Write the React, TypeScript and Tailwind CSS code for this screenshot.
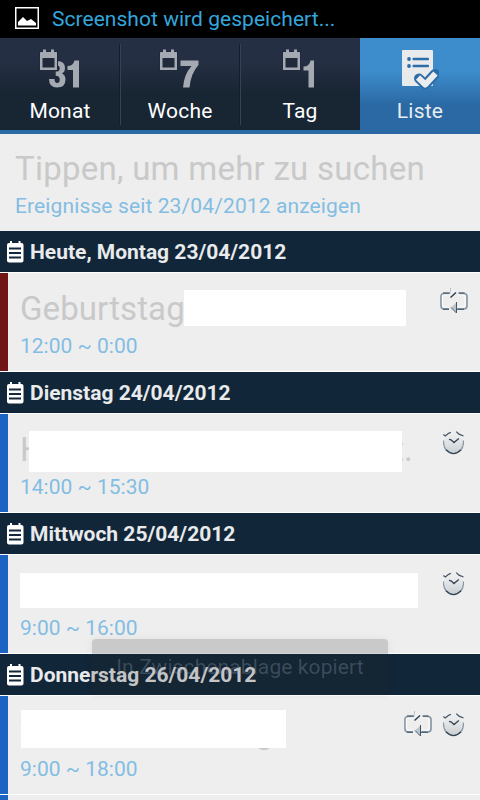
import React from "react";

const font = "font-['Roboto','Liberation_Sans',sans-serif]";

function CalendarGlyph() {
  return (
    <>
      <rect x="-1" y="1" width="19" height="20" rx="1" fill="#202a3a" />
      <rect x="0" y="2" width="17" height="18" rx=".5" fill="#a5a9b2" />
      <rect x="3" y="-.5" width="3" height="3.500" fill="#a5a9b2" />
      <rect x="11" y="-.5" width="3" height="3.500" fill="#a5a9b2" />
      <rect x="2.500" y="8" width="12" height="9.500" fill="#202a3a" />
    </>
  );
}

function DayIcon({ kind }: { kind: "31" | "7" | "1" }) {
  return (
    <svg width="42" height="40" viewBox="0 0 42 40" className="overflow-visible" fill="#a5a9b2">
      {kind === "31" && (
        <g>
          <path d="M9.500 20v-2q0-7 7.500-7q8 0 8 7q0 4-3 5.500q3.500 1.500 3.500 6q0 8-8.500 8q-8 0-8-8.500h5.500q0 4 2.700 4q2.500 0 2.500-3.500q0-3.700-4-3.700v-4.200q4 0 4-3.200q0-3-2.500-3q-2.200 0-2.200 4z" />
          <path d="M27.500 20v-4q5.500 0 7-5.500h4.500v27h-6v-17.500z" />
        </g>
      )}
      {kind === "7" && <path d="M20.500 10.500h18v4.500q-7.500 8-9 22.500h-6.500q1-13 8.500-21.500h-11z" />}
      {kind === "1" && <path d="M20.500 20.500v-4q6 0 7-6h3.500v27h-5.500v-17z" />}
      <CalendarGlyph />
    </svg>
  );
}

function ListIcon() {
  return (
    <svg width="37" height="40" viewBox="0 0 37 40">
      <rect width="31" height="36" rx="1" fill="#e9eaec" />
      <g fill="#2c6eaa">
        <circle cx="7" cy="9" r="1.900" />
        <circle cx="7" cy="16" r="1.900" />
        <rect x="10.500" y="7.800" width="16.500" height="2.400" rx="1" />
        <rect x="10.500" y="14.800" width="16.500" height="2.400" rx="1" />
      </g>
      <path d="M17 28.500l6.300 6l9.700-10.500" fill="none" stroke="#2b6ca9" strokeWidth="10" strokeLinejoin="round" strokeLinecap="round" />
      <path d="M16 27.500l7.300 7l10.200-11" fill="none" stroke="#ebeced" strokeWidth="6" strokeLinejoin="round" />
    </svg>
  );
}

function NoteIcon() {
  return (
    <svg width="17" height="22" viewBox="0 0 17 22" className="mt-2.5 shrink-0">
      <rect x="0" y="2" width="16.500" height="19.500" rx="2" fill="#fff" />
      <rect x="3" y="0" width="2" height="4" fill="#fff" />
      <rect x="11.500" y="0" width="2" height="4" fill="#fff" />
      <path d="M2 7.500h12M2 12h12M2 16.500h12" stroke="#14283b" strokeWidth="2" />
    </svg>
  );
}

function RepeatIcon() {
  return (
    <svg width="28" height="27" viewBox="0 0 28 27">
      <path d="M9 5.500H4q-3 0-3 3v9q0 3.500 3 3.500h5M19 5.500h5q3 0 3 3v9q0 3.500-3 3.500h-6" fill="none" stroke="#8998a6" strokeWidth="1.700" />
      <path d="M9 7H4.500q-2 0-2 2v8q0 2 2 2H9M18 7h5q2 0 2 2v8q0 2-2 2h-5" fill="none" stroke="#fafafa" strokeWidth="1.200" />
      <path d="M3 5h7.500M18.500 5h6" stroke="#354657" strokeWidth="1.200" />
      <path d="M3 21.300h6M17 21.300h7" stroke="#50677c" strokeWidth="1.500" />
      <path d="M10.500 0v9l6-5z" fill="#f0f1f2" />
      <path d="M10.500 0v3.500" stroke="#b3bdc6" />
      <path d="M10.500 9.500l5.500-5" stroke="#263647" strokeWidth="1.300" />
      <path d="M17 14v11l-6-5.500z" fill="#bcc4ca" />
      <path d="M11 19.500l5.500 5.500v-11" fill="none" stroke="#45576a" strokeWidth="1" />
    </svg>
  );
}

function AlarmIcon() {
  return (
    <svg width="21" height="24" viewBox="0 0 21 24" className="mr-1 mt-0.5">
      <defs>
        <linearGradient id="clock-face" x2="0" y2="1">
          <stop stopColor="#eeeeee" />
          <stop offset=".5" stopColor="#dfe2e4" />
          <stop offset="1" stopColor="#c8cdd1" />
        </linearGradient>
      </defs>
      <circle cx="10.500" cy="12.500" r="10" fill="url(#clock-face)" />
      <path d="M.6 9.500q-.6 6 2.800 9.800M20.400 9.500q.6 6-2.800 9.800" fill="none" stroke="#8998a6" strokeWidth="1.200" />
      <path d="M3 18.800q7.500 7.600 15 0" fill="none" stroke="#344454" strokeWidth="1.300" />
      <path d="M.3 3.500l2 1.500l3-2.500l2.500-1.200M13.300 .6l2.700 2.600l4.500 1.800" fill="none" stroke="#405468" strokeWidth="1.300" />
      <path d="M6 8.300l2 .5l3 2.800l4.800-4" fill="none" stroke="#354555" strokeWidth="1.300" />
    </svg>
  );
}

function Tab({ label, children, active = false }: { label: string; children: React.ReactNode; active?: boolean }) {
  return (
    <div
      className={
        active
          ? "flex h-24 w-[120px] flex-col bg-linear-to-b from-[#3d8ccc] from-35% to-[#2a69a3] to-70%"
          : "flex h-[92px] w-[120px] flex-col bg-linear-to-b from-[#252f43] from-25% to-[#182533] to-60%"
      }
    >
      <div className="flex h-[61px] pt-3">{children}</div>
      <div className={active ? "text-center text-[21px] leading-6 tracking-[.2px] text-[#e9edf1]" : "text-center text-[21px] leading-6 tracking-[.2px] text-white"}>{label}</div>
    </div>
  );
}

function TabDivider() {
  return <div className="z-10 -mx-px mt-1.5 h-[81px] w-0.5 border-x border-l-[#141d2a] border-r-[#344254]" />;
}

function DayHeader({ label }: { label: string }) {
  return (
    <div className="flex h-[41px] shrink-0 bg-[#122639] pl-[7px] text-[21px] font-bold leading-[43px] text-[#e8eaec]">
      <NoteIcon />
      <span className="ml-1.5 whitespace-nowrap">{label}</span>
    </div>
  );
}

function EventRow({ bar, title, time, mask, icons }: { bar: string; title: React.ReactNode; time: string; mask: string; icons: React.ReactNode }) {
  return (
    <div className="flex h-[100px] shrink-0 border-y border-white">
      <div className={`w-2 shrink-0 ${bar}`} />
      <div className="relative flex min-w-0 grow flex-col pl-3 pt-[15px]">
        <div className="flex h-[42px] whitespace-nowrap text-[33px] leading-[42px] tracking-[.1px] text-[#c9c9c9]">{title}</div>
        <div className="mt-[3px] text-[21px] leading-[26px] text-[#83bde3]">{time}</div>
        <div className={`absolute bg-white ${mask}`} />
      </div>
      <div className="flex shrink-0 gap-[11px] pr-3 pt-[15px]">{icons}</div>
    </div>
  );
}

export default function App() {
  return (
    <div className={`relative flex h-[800px] w-[480px] flex-col overflow-hidden bg-[#eeeeee] ${font}`}>
      <header className="flex h-[38px] shrink-0 bg-black pl-[15px] text-[21px] leading-[39px] text-[#33a7dc]">
        <svg width="24" height="22" viewBox="0 0 24 22" className="mt-[7px]">
          <rect x=".75" y=".75" width="22.500" height="20.500" fill="#000" stroke="#fff" strokeWidth="1.500" />
          <path d="M3 18.500v-3.500l5-5l4 4l4-2l5 4v2.500z" fill="#fff" />
        </svg>
        <span className="ml-[13px] whitespace-nowrap tracking-[.04px]">Screenshot wird gespeichert...</span>
      </header>
      <nav className="flex h-24 shrink-0 bg-[#2a6aa5]">
        <Tab label="Monat"><div className="pl-10"><DayIcon kind="31" /></div></Tab>
        <TabDivider />
        <Tab label="Woche"><div className="pl-10"><DayIcon kind="7" /></div></Tab>
        <TabDivider />
        <Tab label="Tag"><div className="pl-[43px]"><DayIcon kind="1" /></div></Tab>
        <Tab label="Liste" active><div className="pl-[42px]"><ListIcon /></div></Tab>
      </nav>
      <section className="flex h-[97px] shrink-0 flex-col whitespace-nowrap pl-[15px] pt-3.5">
        <div className="text-[33px] leading-[42px] tracking-[.25px] text-[#c9c9c9]">Tippen, um mehr zu suchen</div>
        <div className="mt-[3px] text-[21px] leading-[26px] tracking-[.12px] text-[#83bde3]">Ereignisse seit 23/04/2012 anzeigen</div>
      </section>
      <DayHeader label="Heute, Montag 23/04/2012" />
      <EventRow bar="bg-[#701617]" title="Geburtstag" time="12:00 ~ 0:00" mask="left-[176px] top-[17px] h-9 w-[222px]" icons={<RepeatIcon />} />
      <DayHeader label="Dienstag 24/04/2012" />
      <EventRow
        bar="bg-[#1c64c2]"
        title={<><span className="w-[373px] shrink-0">H</span><span>t.</span></>}
        time="14:00 ~ 15:30"
        mask="left-[21px] top-[17px] h-[41px] w-[373px]"
        icons={<AlarmIcon />}
      />
      <DayHeader label="Mittwoch 25/04/2012" />
      <EventRow bar="bg-[#1c64c2]" title="" time="9:00 ~ 16:00" mask="left-3 top-[18px] h-[35px] w-[398px]" icons={<AlarmIcon />} />
      <DayHeader label="Donnerstag 26/04/2012" />
      <EventRow
        bar="bg-[#1c64c2]"
        title={<><span className="w-[235px]">T</span><span>g</span></>}
        time="9:00 ~ 18:00"
        mask="left-[13px] top-[14px] h-[38px] w-[265px]"
        icons={<><RepeatIcon /><AlarmIcon /></>}
      />
      <div className="h-[5px] w-2 shrink-0 bg-[#1c64c2]" />
      <div className="absolute left-[92px] top-[639px] flex h-[56px] w-[296px] items-center justify-center rounded-sm bg-[#202020]/18 pt-px text-[21px] tracking-[.1px] text-[#a0b0c0]/28 shadow-[0_0_8px_rgba(0,0,0,.06)]">
        In Zwischenablage kopiert
      </div>
    </div>
  );
}
